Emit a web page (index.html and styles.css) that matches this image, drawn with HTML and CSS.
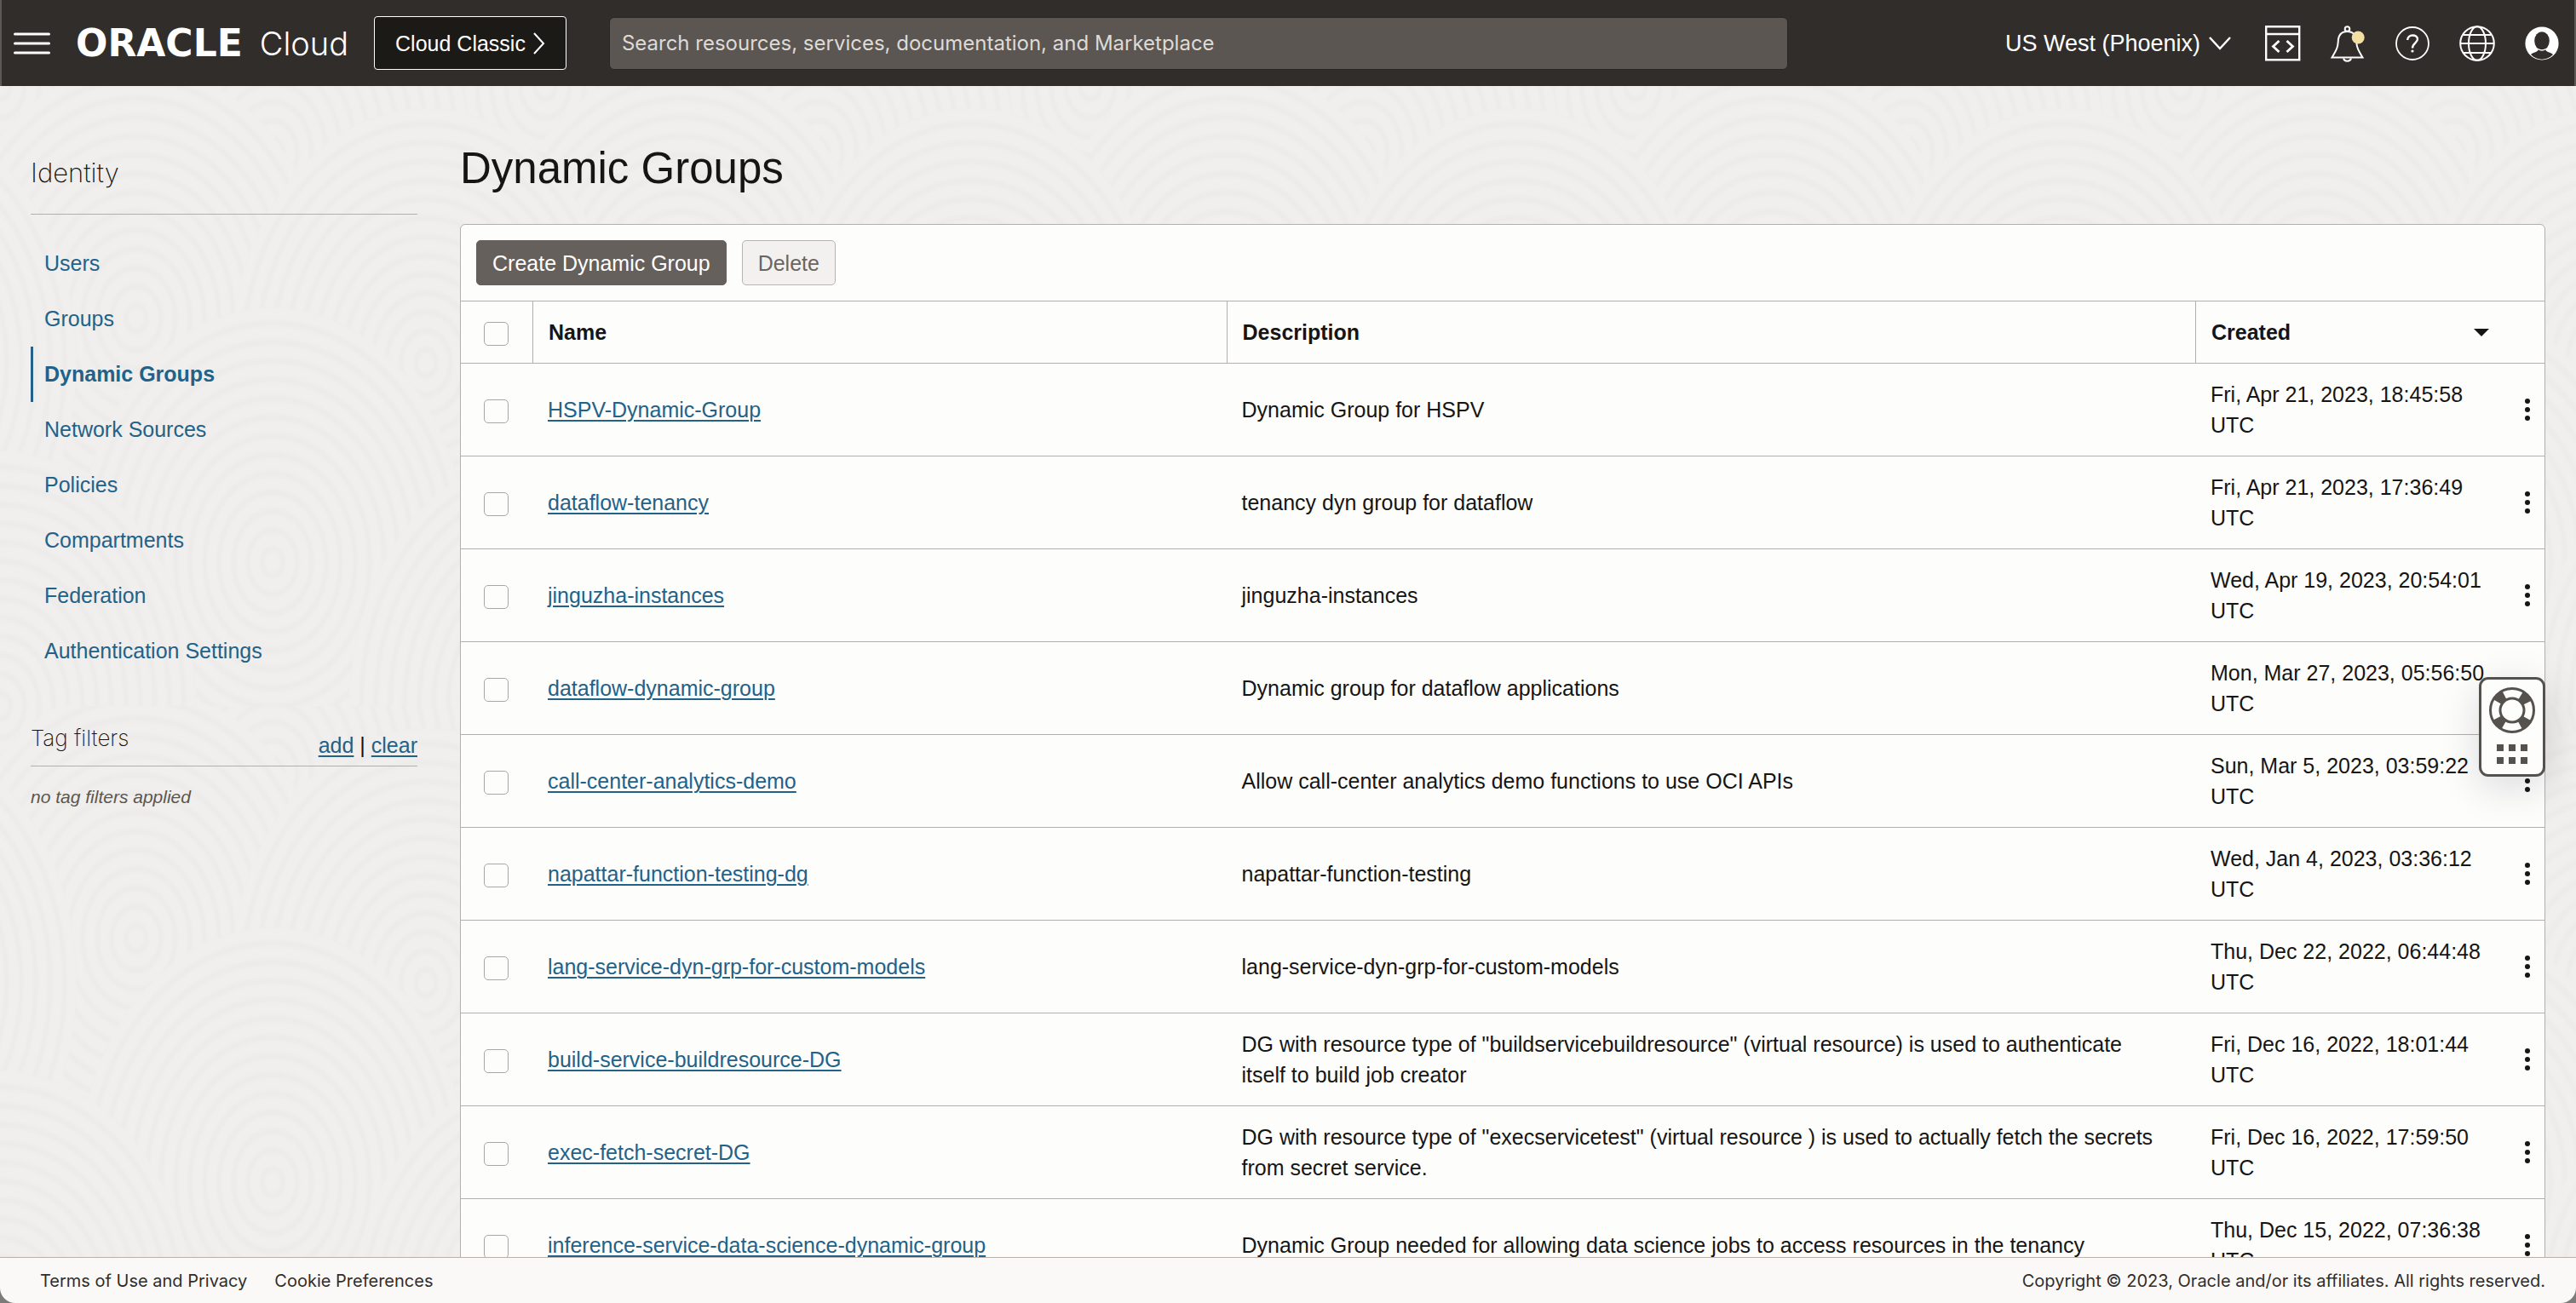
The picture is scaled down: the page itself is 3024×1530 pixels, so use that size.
FILE: index.html
```html
<!DOCTYPE html>
<html lang="en">
<head>
<meta charset="utf-8">
<title>Dynamic Groups</title>
<link rel="stylesheet" href="styles.css">
</head>
<body>
<div class="app">
  <header class="topbar">
    <button class="icon-button" type="button" aria-label="Open navigation menu">
      <svg width="43" height="26" viewBox="0 0 43 26"><path d="M1.5 2h40M1.5 13h40M1.5 24h40" stroke="#fff" stroke-width="3" stroke-linecap="round"/></svg>
    </button>
    <a class="brand" href="#"><span class="brand-name">ORACLE</span><span class="brand-product">Cloud</span></a>
    <button class="classic" type="button">Cloud Classic
      <svg width="15" height="26" viewBox="0 0 15 26"><path d="M2 1l11 12L2 25" fill="none" stroke="#fff" stroke-width="2"/></svg>
    </button>
    <input class="search" type="search" aria-label="Search" placeholder="Search resources, services, documentation, and Marketplace">
    <div class="tools">
      <button class="region" type="button">US West (Phoenix)
        <svg width="26" height="16" viewBox="0 0 26 16"><path d="M1 1l12 13L25 1" fill="none" stroke="#fff" stroke-width="2.5"/></svg>
      </button>
      <button class="icon-button" type="button" aria-label="Developer tools">
        <svg width="42" height="44" viewBox="0 0 42 44" fill="none" stroke="#fff" stroke-width="2.4"><path d="M1.2 2.2h39v39h-39zM1.2 11h39"/><path d="M16.5 19l-7 6.500 7 6.500M25.500 19l7 6.500-7 6.500" stroke-width="2.800"/></svg>
      </button>
      <button class="icon-button" type="button" aria-label="Announcements">
        <svg width="42" height="44" viewBox="0 0 42 44" fill="none" stroke="#fff" stroke-width="2"><path d="M2.500 38.500C7 31 9.500 27 9.700 20.500C9.900 11 14 8 20.500 8S31 11 31.300 20.500C31.500 27 34 31 38.500 38.500z"/><circle cx="20.500" cy="5" r="2.800"/><path d="M16 39.500a4.600 4 0 0 0 9 0"/><circle cx="33.200" cy="15" r="7.500" fill="#f3dfa4" stroke="none"/></svg>
      </button>
      <button class="icon-button" type="button" aria-label="Help">
        <svg width="42" height="44" viewBox="0 0 42 44" fill="none" stroke="#fff" stroke-width="1.800"><circle cx="21" cy="22" r="19"/><path d="M15.200 18c0-7.500 11.800-7 11.800-1 0 4-6 5-6 10.500" stroke-width="2.400"/><circle cx="21" cy="31" r="1.600" fill="#fff" stroke="none"/></svg>
      </button>
      <button class="icon-button" type="button" aria-label="Language">
        <svg width="42" height="44" viewBox="0 0 42 44" fill="none" stroke="#fff" stroke-width="2"><circle cx="21" cy="22" r="19.800"/><ellipse cx="21" cy="22" rx="10" ry="19.800"/><path d="M1 22h40M4.500 12h33M4.500 33h33"/></svg>
      </button>
      <button class="icon-button" type="button" aria-label="Profile">
        <svg width="42" height="44" viewBox="0 0 42 44"><circle cx="21" cy="22" r="19.600" fill="#fff"/><path d="M8 35c3-3 8-2.500 8.800-6h8.400c.8 3.500 5.800 3 8.800 6-7 7.500-19 7.500-26 0z" fill="#312d2a"/><ellipse cx="21" cy="19" rx="8.800" ry="10.800" fill="#312d2a"/><path d="M16.500 28.500q4.500 3 9 0" fill="none" stroke="#fff" stroke-width="1.500"/></svg>
      </button>
    </div>
  </header>

  <div class="body">
    <svg class="texture" aria-hidden="true">
      <defs>
        <radialGradient id="ring" gradientUnits="userSpaceOnUse" cx="0" cy="0" r="17" spreadMethod="repeat">
          <stop offset="0" stop-color="#f0efed"/><stop offset=".4" stop-color="#f0efed"/><stop offset=".7" stop-color="#ecebe9"/><stop offset="1" stop-color="#f0efed"/>
        </radialGradient>
        <ellipse id="disc" rx="230" ry="230" fill="url(#ring)"/>
        <pattern id="grain" width="640" height="560" patternUnits="userSpaceOnUse" patternTransform="scale(1 1.300)">
          <rect width="640" height="560" fill="#f0efed"/>
          <use href="#disc" x="0" y="0"/><use href="#disc" x="640" y="0"/>
          <use href="#disc" x="320" y="60"/><use href="#disc" x="160" y="210"/>
          <use href="#disc" x="500" y="250"/><use href="#disc" x="-140" y="250"/>
          <use href="#disc" x="320" y="430"/><use href="#disc" x="0" y="560"/><use href="#disc" x="640" y="560"/>
        </pattern>
      </defs>
      <rect width="100%" height="100%" fill="url(#grain)"/>
    </svg>
    <aside class="sidebar">
      <h2 class="side-title">Identity</h2>
      <nav class="side-nav">
        <a href="#">Users</a>
        <a href="#">Groups</a>
        <a class="current" href="#" aria-current="page">Dynamic Groups</a>
        <a href="#">Network Sources</a>
        <a href="#">Policies</a>
        <a href="#">Compartments</a>
        <a href="#">Federation</a>
        <a href="#">Authentication Settings</a>
      </nav>
      <div class="filters-head">
        <h3 class="filters-title">Tag filters</h3>
        <span><a href="#">add</a> | <a href="#">clear</a></span>
      </div>
      <p class="filters-empty">no tag filters applied</p>
    </aside>

    <main class="content">
      <h1 class="title">Dynamic Groups</h1>
      <section class="panel">
        <div class="toolbar">
          <button class="btn btn-primary" type="button">Create Dynamic Group</button>
          <button class="btn" type="button">Delete</button>
        </div>
        <table class="groups">
          <colgroup><col class="c-check"><col class="c-name"><col><col class="c-date"><col class="c-menu"></colgroup>
          <thead>
            <tr><th><input type="checkbox" aria-label="Select all"></th><th>Name</th><th>Description</th>
              <th colspan="2"><div class="sorted">Created <svg width="18" height="9" viewBox="0 0 18 9"><path d="M0 0h18L9 9z" fill="#161513"/></svg></div></th></tr>
          </thead>
          <tbody>
            <tr><td><input type="checkbox" aria-label="Select HSPV-Dynamic-Group"></td><td><a href="#">HSPV-Dynamic-Group</a></td><td>Dynamic Group for HSPV</td><td>Fri, Apr 21, 2023, 18:45:58 UTC</td><td><button class="more" type="button" aria-label="Actions"><i></i><i></i><i></i></button></td></tr>
            <tr><td><input type="checkbox" aria-label="Select dataflow-tenancy"></td><td><a href="#">dataflow-tenancy</a></td><td>tenancy dyn group for dataflow</td><td>Fri, Apr 21, 2023, 17:36:49 UTC</td><td><button class="more" type="button" aria-label="Actions"><i></i><i></i><i></i></button></td></tr>
            <tr><td><input type="checkbox" aria-label="Select jinguzha-instances"></td><td><a href="#">jinguzha-instances</a></td><td>jinguzha-instances</td><td>Wed, Apr 19, 2023, 20:54:01 UTC</td><td><button class="more" type="button" aria-label="Actions"><i></i><i></i><i></i></button></td></tr>
            <tr><td><input type="checkbox" aria-label="Select dataflow-dynamic-group"></td><td><a href="#">dataflow-dynamic-group</a></td><td>Dynamic group for dataflow applications</td><td>Mon, Mar 27, 2023, 05:56:50 UTC</td><td><button class="more" type="button" aria-label="Actions"><i></i><i></i><i></i></button></td></tr>
            <tr><td><input type="checkbox" aria-label="Select call-center-analytics-demo"></td><td><a href="#">call-center-analytics-demo</a></td><td>Allow call-center analytics demo functions to use OCI APIs</td><td>Sun, Mar 5, 2023, 03:59:22 UTC</td><td><button class="more" type="button" aria-label="Actions"><i></i><i></i><i></i></button></td></tr>
            <tr><td><input type="checkbox" aria-label="Select napattar-function-testing-dg"></td><td><a href="#">napattar-function-testing-dg</a></td><td>napattar-function-testing</td><td>Wed, Jan 4, 2023, 03:36:12 UTC</td><td><button class="more" type="button" aria-label="Actions"><i></i><i></i><i></i></button></td></tr>
            <tr><td><input type="checkbox" aria-label="Select lang-service-dyn-grp-for-custom-models"></td><td><a href="#">lang-service-dyn-grp-for-custom-models</a></td><td>lang-service-dyn-grp-for-custom-models</td><td>Thu, Dec 22, 2022, 06:44:48 UTC</td><td><button class="more" type="button" aria-label="Actions"><i></i><i></i><i></i></button></td></tr>
            <tr><td><input type="checkbox" aria-label="Select build-service-buildresource-DG"></td><td><a href="#">build-service-buildresource-DG</a></td><td>DG with resource type of "buildservicebuildresource" (virtual resource) is used to authenticate itself to build job creator</td><td>Fri, Dec 16, 2022, 18:01:44 UTC</td><td><button class="more" type="button" aria-label="Actions"><i></i><i></i><i></i></button></td></tr>
            <tr><td><input type="checkbox" aria-label="Select exec-fetch-secret-DG"></td><td><a href="#">exec-fetch-secret-DG</a></td><td>DG with resource type of "execservicetest" (virtual resource ) is used to actually fetch the secrets from secret service.</td><td>Fri, Dec 16, 2022, 17:59:50 UTC</td><td><button class="more" type="button" aria-label="Actions"><i></i><i></i><i></i></button></td></tr>
            <tr><td><input type="checkbox" aria-label="Select inference-service-data-science-dynamic-group"></td><td><a href="#">inference-service-data-science-dynamic-group</a></td><td>Dynamic Group needed for allowing data science jobs to access resources in the tenancy</td><td>Thu, Dec 15, 2022, 07:36:38 UTC</td><td><button class="more" type="button" aria-label="Actions"><i></i><i></i><i></i></button></td></tr>
          </tbody>
        </table>
      </section>
    </main>
  </div>

  <button class="support" type="button" aria-label="Support">
    <svg width="54" height="54" viewBox="0 0 54 54" fill="none" stroke="#55514c"><circle cx="27" cy="27" r="20" stroke-width="13" stroke-dasharray="11.400 20.016" stroke-dashoffset="-10"/><circle cx="27" cy="27" r="25.500" stroke-width="3"/><circle cx="27" cy="27" r="14" stroke-width="3"/></svg>
    <svg width="36" height="23" viewBox="0 0 36 23"><path d="M0 0h8v8H0zM14 0h8v8h-8zM28 0h8v8h-8zM0 15h8v8H0zM14 15h8v8h-8zM28 15h8v8h-8z" fill="#55514c"/></svg>
  </button>

  <footer class="footer">
    <a href="#">Terms of Use and Privacy</a>
    <a href="#">Cookie Preferences</a>
    <span class="copyright">Copyright © 2023, Oracle and/or its affiliates. All rights reserved.</span>
  </footer>
</div>
</body>
</html>
```
FILE: styles.css
```css
* { box-sizing: border-box; }

body {
  margin: 0;
  background: #7d7b79;
  color: #161513;
  font: 25px/36px "Liberation Sans", Arial, sans-serif;
}

button, input { font: inherit; color: inherit; margin: 0; }
button { cursor: pointer; }
h1, h2, h3, p { margin: 0; font-weight: 400; }
svg { display: block; flex: none; }

a {
  color: #226289;
  text-decoration: underline;
  text-decoration-thickness: 2px;
  text-underline-offset: 3px;
}

.app {
  position: relative;
  display: flex;
  flex-direction: column;
  height: 100vh;
  overflow: hidden;
  border-radius: 0 0 18px 18px;
}

/* Top bar */
.topbar {
  display: flex;
  align-items: center;
  flex: none;
  height: 101px;
  padding: 0 17px 0 14px;
  border: solid #5d5956;
  border-width: 0 2px;
  background: #312d2a;
  color: #fff;
}

.icon-button {
  display: flex;
  padding: 0;
  border: 0;
  background: none;
}

.brand {
  display: flex;
  align-items: center;
  gap: 20px;
  margin: 0 30px;
  color: #fff;
  text-decoration: none;
}

.brand-name { font: 700 44px/48px "DejaVu Sans", sans-serif; }
.brand-product { font: 300 38px/48px Inter, sans-serif; }

.classic {
  display: flex;
  align-items: center;
  gap: 8px;
  height: 63px;
  padding: 0 24px;
  border: 1px solid #fff;
  border-radius: 4px;
  background: #1b1a16;
}

.search {
  flex: 0 0 46.3%;
  height: 62px;
  margin-left: 50px;
  padding: 0 14px;
  border: 1px solid #2a2623;
  border-radius: 6px;
  background: #5b5652;
  font: 24px/36px Inter, sans-serif;
}
.search::placeholder { color: #dedad6; opacity: 1; }

.tools {
  display: flex;
  align-items: center;
  gap: 34px;
  margin-left: auto;
}

.region {
  display: flex;
  align-items: center;
  gap: 10px;
  margin-right: 6px;
  padding: 0;
  border: 0;
  background: none;
  font-size: 27px;
}

/* Page body */
.body {
  position: relative;
  display: flex;
  flex: 1;
  gap: 50px;
  min-height: 0;
  padding: 0 36px;
  overflow: hidden;
}

.texture {
  position: absolute;
  inset: 0;
  width: 100%;
  height: 100%;
}

.sidebar, .content { position: relative; }

.sidebar {
  flex: 0 0 454px;
  padding-top: 78px;
}

.side-title {
  padding-bottom: 24px;
  border-bottom: 1px solid #b3afab;
  font: 200 31px/48px Inter, sans-serif;
}

.side-nav {
  display: flex;
  flex-direction: column;
  margin: 25px 0 50px;
}
.side-nav a {
  padding-left: 13px;
  border-left: 3px solid transparent;
  line-height: 65px;
  text-decoration: none;
}
.side-nav .current { border-color: #226289; font-weight: 700; }

.filters-head {
  display: flex;
  justify-content: space-between;
  align-items: flex-end;
  padding-bottom: 6px;
  border-bottom: 1px solid #b3afab;
}
.filters-title {
  padding-bottom: 6px;
  font: 200 26px/40px Inter, sans-serif;
}
.filters-empty {
  margin-top: 18px;
  color: #5c5650;
  font-size: 21px;
  font-style: italic;
}

.content {
  flex: 1;
  min-width: 0;
  padding-top: 65px;
}

.title {
  margin-bottom: 33px;
  font-size: 51px;
  line-height: 64px;
}

.panel {
  border: 1px solid #b3afab;
  border-radius: 6px;
  background: #fdfdfc;
}

.toolbar {
  display: flex;
  gap: 18px;
  padding: 18px;
}

.btn {
  height: 53px;
  padding: 0 18px;
  border: 1px solid #b8b4b0;
  border-radius: 5px;
  background: #f3f1f0;
  color: #6b6560;
}
.btn-primary {
  border-color: #65605b;
  background: #65605b;
  color: #fff;
}

/* Groups table */
.groups {
  width: 100%;
  border-collapse: separate;
  border-spacing: 0;
  table-layout: fixed;
}
.c-check { width: 84px; }
.c-name { width: 33.3%; }
.c-date { width: 370px; }
.c-menu { width: 40px; }

.groups th, .groups td {
  padding: 18px;
  border-top: 1px solid #b3afab;
  text-align: left;
  vertical-align: middle;
}
.groups th + th { border-left: 1px solid #b3afab; }
.groups td:nth-child(3) { padding-right: 36px; }
.groups td:last-child { padding: 0; }
.groups th:first-child, .groups td:first-child { padding: 4px 0 0 27px; }

.groups input {
  display: block;
  width: 29px;
  height: 28px;
  border: 1px solid #aaa6a2;
  border-radius: 5px;
  background: #fdfdfc;
  appearance: none;
}

.sorted {
  display: flex;
  align-items: center;
  justify-content: space-between;
  padding-right: 47px;
}

.more {
  display: flex;
  flex-direction: column;
  align-items: center;
  gap: 4px;
  width: 40px;
  padding: 8px 0;
  border: 0;
  background: none;
}
.more i {
  width: 6px;
  height: 6px;
  border-radius: 50%;
  background: #161513;
}

/* Floating support widget */
.support {
  position: absolute;
  top: 795px;
  right: 36px;
  display: flex;
  flex-direction: column;
  align-items: center;
  gap: 13px;
  width: 78px;
  height: 117px;
  padding: 9px 0;
  border: 3px solid #55514c;
  border-radius: 11px;
  background: #fdfdfc;
  box-shadow: 0 12px 48px rgba(0, 0, 30, .14);
}

/* Footer */
.footer {
  position: relative;
  display: flex;
  align-items: center;
  gap: 32px;
  flex: none;
  height: 54px;
  padding: 0 36px 0 47px;
  border-top: 1px solid #bab1ab;
  background: #faf9f8;
  color: #312d2a;
  font: 20px/30px Inter, sans-serif;
}
.footer a { color: inherit; text-decoration: none; }
.copyright { margin-left: auto; }
```
